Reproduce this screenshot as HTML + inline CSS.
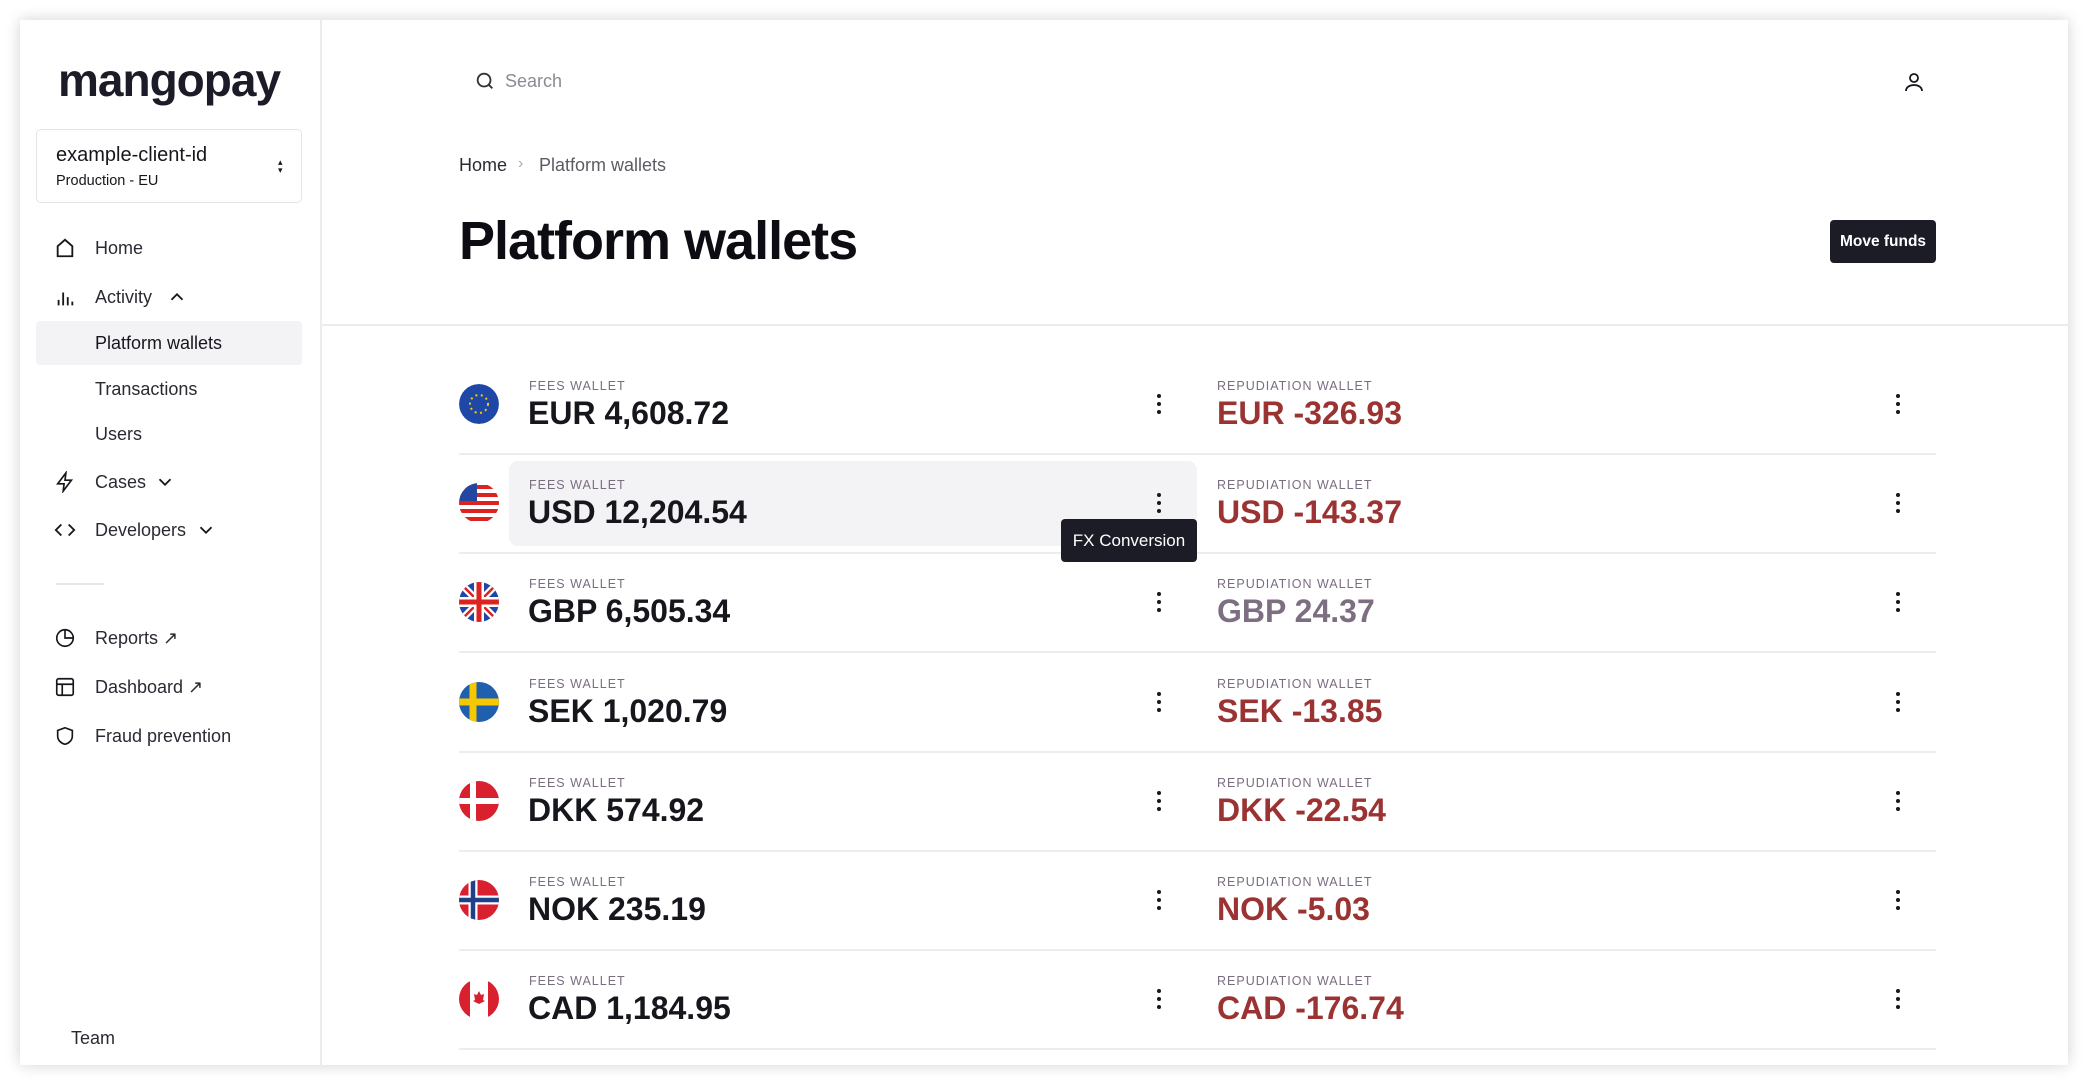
<!DOCTYPE html>
<html><head><meta charset="utf-8"><style>
*{margin:0;padding:0;box-sizing:border-box}
body{width:2088px;height:1087px;background:#fff;font-family:"Liberation Sans",sans-serif;color:#16161d;position:relative;overflow:hidden}
.card{position:absolute;left:20px;top:20px;width:2048px;height:1045px;background:#fff;box-shadow:0 0 14px rgba(0,0,0,.18)}
.side{position:absolute;left:20px;top:20px;width:302px;height:1045px;border-right:2px solid #ececee}
.a{position:absolute;white-space:nowrap}
.nav{font-size:18px;color:#2a2a33}
.ic{position:absolute;width:22px;height:22px}
.lbl{font-size:12.5px;letter-spacing:1px;color:#7a6d80}
.amt{font-size:32px;font-weight:bold;letter-spacing:0}
.sep{position:absolute;left:459px;width:1477px;height:2px;background:#ededef}
.keb{position:absolute;width:4px}
.keb i{display:block;width:4px;height:4px;border-radius:2px;background:#16161d;margin-bottom:4px}
.red{color:#9b3333}
</style></head><body>
<div class="card"></div>
<div class="side"></div>
<div class="a" style="left:58px;top:53px;font-size:46px;font-weight:bold;letter-spacing:-1px;color:#1c1c28">mangopay</div>
<div class="a" style="left:36px;top:129px;width:266px;height:74px;border:1.5px solid #e4e4e8;border-radius:5px"></div>
<div class="a" style="left:56px;top:144px;font-size:20px;color:#16161d">example-client-id</div>
<div class="a" style="left:56px;top:173px;font-size:14.5px;color:#16161d">Production - EU</div>
<div class="a" style="left:278px;top:158px;font-size:9px;line-height:8px">▴<br>▾</div>

<svg class="ic" style="left:54px;top:237px" viewBox="0 0 24 24" fill="none" stroke="#16161d" stroke-width="2"><path d="M4 21V10l8-7 8 7v11z"/></svg>
<div class="a nav" style="left:95px;top:238px">Home</div>
<svg class="ic" style="left:54px;top:287px" viewBox="0 0 24 24" fill="none" stroke="#16161d" stroke-width="2"><path d="M5 20v-6M10 20V6M15 20v-9M20 20v-4"/></svg>
<div class="a nav" style="left:95px;top:287px">Activity</div>
<svg class="ic" style="left:166px;top:286px" viewBox="0 0 24 24" fill="none" stroke="#16161d" stroke-width="2"><path d="M6 15l6-6 6 6"/></svg>
<div class="a" style="left:36px;top:321px;width:266px;height:44px;background:#f3f3f5;border-radius:4px"></div>
<div class="a nav" style="left:95px;top:333px;color:#16161d">Platform wallets</div>
<div class="a nav" style="left:95px;top:379px">Transactions</div>
<div class="a nav" style="left:95px;top:424px">Users</div>
<svg class="ic" style="left:54px;top:471px" viewBox="0 0 24 24" fill="none" stroke="#16161d" stroke-width="1.8"><path d="M13 2L4 14h7l-1 8 9-12h-7z"/></svg>
<div class="a nav" style="left:95px;top:472px">Cases</div>
<svg class="ic" style="left:154px;top:471px" viewBox="0 0 24 24" fill="none" stroke="#16161d" stroke-width="2"><path d="M6 9l6 6 6-6"/></svg>
<svg class="ic" style="left:54px;top:519px" viewBox="0 0 24 24" fill="none" stroke="#16161d" stroke-width="2"><path d="M8 6l-6 6 6 6M16 6l6 6-6 6"/></svg>
<div class="a nav" style="left:95px;top:520px">Developers</div>
<svg class="ic" style="left:195px;top:519px" viewBox="0 0 24 24" fill="none" stroke="#16161d" stroke-width="2"><path d="M6 9l6 6 6-6"/></svg>
<div class="a" style="left:56px;top:583px;width:48px;height:2px;background:#e6e6ea"></div>
<svg class="ic" style="left:54px;top:627px" viewBox="0 0 24 24" fill="none" stroke="#16161d" stroke-width="1.8"><circle cx="12" cy="12" r="9"/><path d="M12 3v9h9"/></svg>
<div class="a nav" style="left:95px;top:628px">Reports ↗</div>
<svg class="ic" style="left:54px;top:676px" viewBox="0 0 24 24" fill="none" stroke="#16161d" stroke-width="1.8"><rect x="3" y="3" width="18" height="18" rx="2"/><path d="M3 9h18M9 9v12"/></svg>
<div class="a nav" style="left:95px;top:677px">Dashboard ↗</div>
<svg class="ic" style="left:54px;top:725px" viewBox="0 0 24 24" fill="none" stroke="#16161d" stroke-width="1.8"><path d="M12 3l8 3v6c0 5-4 8-8 9-4-1-8-4-8-9V6z"/></svg>
<div class="a nav" style="left:95px;top:726px">Fraud prevention</div>
<div class="a nav" style="left:71px;top:1028px">Team</div>

<svg class="ic" style="left:474px;top:70px" viewBox="0 0 24 24" fill="none" stroke="#333" stroke-width="2"><circle cx="11" cy="11" r="7"/><path d="M16 16l4 4"/></svg>
<div class="a" style="left:505px;top:71px;font-size:18px;color:#8a8a92">Search</div>
<svg class="ic" style="left:1902px;top:70px;width:24px;height:24px" viewBox="0 0 24 24" fill="none" stroke="#16161d" stroke-width="1.8"><circle cx="12" cy="8" r="4"/><path d="M4 21c0-4 4-6 8-6s8 2 8 6"/></svg>

<div class="a" style="left:459px;top:155px;font-size:18px;color:#2a2a33">Home</div>
<div class="a" style="left:518px;top:155px;font-size:16px;color:#aaa">›</div>
<div class="a" style="left:539px;top:155px;font-size:18px;color:#5b5b66">Platform wallets</div>
<div class="a" style="left:459px;top:210px;font-size:54px;font-weight:bold;letter-spacing:-1px;color:#0c0c12">Platform wallets</div>
<div class="a" style="left:1830px;top:220px;width:106px;height:43px;background:#1c1c26;border-radius:4px;color:#fff;font-size:15.5px;font-weight:bold;text-align:center;line-height:43px">Move funds</div>
<div class="a" style="left:322px;top:324px;width:1746px;height:2px;background:#ececee"></div>

<div class="a" style="left:509px;top:461px;width:688px;height:85px;background:#f3f3f5;border-radius:9px"></div>

<div id="rows"></div>
<script>
var d=[["eu","EUR 4,608.72","EUR -326.93",1],["us","USD 12,204.54","USD -143.37",1],["gb","GBP 6,505.34","GBP 24.37",0],["se","SEK 1,020.79","SEK -13.85",1],["dk","DKK 574.92","DKK -22.54",1],["no","NOK 235.19","NOK -5.03",1],["ca","CAD 1,184.95","CAD -176.74",1]];
var fl={
eu:'<circle cx="20" cy="20" r="20" fill="#1f47a8"/><circle cx="20" cy="20" r="9" fill="none" stroke="#f5c800" stroke-width="2" stroke-dasharray="2 3.5"/>',
us:'<rect width="40" height="40" fill="#fff"/><g fill="#d22"><rect y="2" width="40" height="4"/><rect y="10" width="40" height="4"/><rect y="18" width="40" height="4"/><rect y="26" width="40" height="4"/><rect y="34" width="40" height="4"/></g><rect width="18" height="18" fill="#2346a0"/>',
gb:'<rect width="40" height="40" fill="#1f47a8"/><path d="M0 0L40 40M40 0L0 40" stroke="#fff" stroke-width="7"/><path d="M0 0L40 40M40 0L0 40" stroke="#d22" stroke-width="2.5"/><path d="M20 0v40M0 20h40" stroke="#fff" stroke-width="10"/><path d="M20 0v40M0 20h40" stroke="#d22" stroke-width="5"/>',
se:'<rect width="40" height="40" fill="#1f5fae"/><path d="M14 0v40M0 20h40" stroke="#f5c800" stroke-width="7"/>',
dk:'<rect width="40" height="40" fill="#d8202e"/><path d="M14 0v40M0 20h40" stroke="#fff" stroke-width="6"/>',
no:'<rect width="40" height="40" fill="#d8202e"/><path d="M14 0v40M0 20h40" stroke="#fff" stroke-width="9"/><path d="M14 0v40M0 20h40" stroke="#1f3f8a" stroke-width="4.5"/>',
ca:'<rect width="40" height="40" fill="#fff"/><rect width="11" height="40" fill="#d8202e"/><rect x="29" width="11" height="40" fill="#d8202e"/><path d="M20 12l2 4 3-1-1 6 2 1-6 3-6-3 2-1-1-6 3 1z" fill="#d8202e"/>'};
var h="";
d.forEach(function(r,i){var c=403+i*99.2;
h+='<svg class="a" style="left:459px;top:'+(c-19)+'px" width="40" height="40" viewBox="0 0 40 40"><clipPath id="c'+i+'"><circle cx="20" cy="20" r="20"/></clipPath><g clip-path="url(#c'+i+')">'+fl[r[0]]+'</g></svg>';
h+='<div class="a lbl" style="left:529px;top:'+(c-24)+'px">FEES WALLET</div>';
h+='<div class="a amt" style="left:528px;top:'+(c-8)+'px">'+r[1]+'</div>';
h+='<div class="a lbl" style="left:1217px;top:'+(c-24)+'px">REPUDIATION WALLET</div>';
h+='<div class="a amt '+(r[3]?'red':'')+'" style="left:1217px;top:'+(c-8)+'px;'+(r[3]?'':'color:#7d6e82')+'">'+r[2]+'</div>';
h+='<div class="keb" style="left:1157px;top:'+(c-9)+'px"><i></i><i></i><i></i></div>';
h+='<div class="keb" style="left:1896px;top:'+(c-9)+'px"><i></i><i></i><i></i></div>';
h+='<div class="sep" style="top:'+(c+50)+'px"></div>';
});
document.getElementById("rows").innerHTML=h;
</script>
<div class="a" style="left:1061px;top:519px;width:136px;height:43px;background:#1c1c26;border-radius:4px;color:#fff;font-size:17px;text-align:center;line-height:43px">FX Conversion</div>
</body></html>
